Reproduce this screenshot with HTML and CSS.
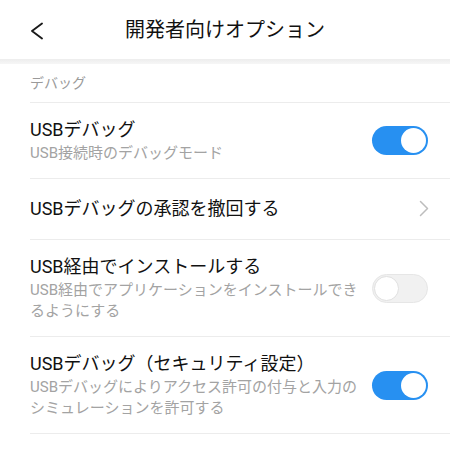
FILE: index.html
```html
<!DOCTYPE html>
<html lang="ja">
<head>
<meta charset="utf-8">
<link rel="stylesheet" href="styles.css">
</head>
<body>
<div class="screen">
  <header class="header">
    <div class="back">
      <svg width="14" height="18" viewBox="0 0 14 18"><polyline points="12,1.5 2,9 12,16.5" fill="none" stroke="#1a1a1a" stroke-width="1.9" stroke-linecap="round" stroke-linejoin="round"/></svg>
    </div>
    <h1 class="title">開発者向けオプション</h1>
    <div></div>
  </header>
  <div class="band"></div>
  <div class="section-label">デバッグ</div>
  <div class="row">
    <div class="text">
      <div class="row-title">USBデバッグ</div>
      <div class="row-sub">USB接続時のデバッグモード</div>
    </div>
    <div class="switch on"><span class="knob"></span></div>
  </div>
  <div class="row single">
    <div class="text">
      <div class="row-title">USBデバッグの承認を撤回する</div>
    </div>
    <svg class="chev" width="10" height="17" viewBox="0 0 10 17"><polyline points="1.5,1.5 8.5,8.5 1.5,15.5" fill="none" stroke="#bdbdbd" stroke-width="1.5" stroke-linecap="round" stroke-linejoin="round"/></svg>
  </div>
  <div class="row">
    <div class="text">
      <div class="row-title">USB経由でインストールする</div>
      <div class="row-sub">USB経由でアプリケーションをインストールできるようにする</div>
    </div>
    <div class="switch off"><span class="knob"></span></div>
  </div>
  <div class="row">
    <div class="text">
      <div class="row-title">USBデバッグ（セキュリティ設定）</div>
      <div class="row-sub">USBデバッグによりアクセス許可の付与と入力のシミュレーションを許可する</div>
    </div>
    <div class="switch on"><span class="knob"></span></div>
  </div>
</div>
</body>
</html>
```

FILE: styles.css
```css
html, body {
  margin: 0;
  padding: 0;
  background: #ffffff;
}
body {
  font-family: Roboto, "Noto Sans CJK JP", sans-serif;
  color: #111111;
}
.screen {
  width: 450px;
}
.header {
  height: 59px;
  display: grid;
  grid-template-columns: 1fr auto 1fr;
  align-items: center;
}
.back {
  padding-left: 30px;
  display: flex;
  align-items: center;
  padding-top: 2px;
}
.title {
  margin: 0;
  font-size: 20px;
  font-weight: 400;
  line-height: 28px;
  color: #111;
  padding-top: 1px;
}
.band {
  height: 5px;
  background: linear-gradient(#ededed, #f6f6f6);
}
.section-label {
  margin-left: 30px;
  padding: 9px 0 8px;
  font-size: 14px;
  line-height: 21px;
  color: #9a9a9a;
  border-bottom: 1px solid #ececec;
}
.row {
  margin-left: 30px;
  padding: 14px 22px 14px 0;
  display: flex;
  align-items: center;
  gap: 10px;
  border-bottom: 1px solid #ececec;
}
.row.single {
  padding-top: 17px;
  padding-bottom: 18px;
}
.text {
  flex: 1;
  min-width: 0;
}
.row-title {
  font-size: 18px;
  line-height: 25px;
  color: #111;
}
.row-sub {
  margin-top: 1px;
  font-size: 15px;
  line-height: 21px;
  color: #a3a3a3;
}
.switch {
  flex: none;
  width: 56px;
  height: 29px;
  border-radius: 15px;
  box-sizing: border-box;
  display: flex;
  align-items: center;
  padding: 0 2px;
}
.switch.on {
  background: #2790f1;
  justify-content: flex-end;
}
.switch.off {
  background: #f1f1f1;
  border: 1px solid #e6e6e6;
  justify-content: flex-start;
  padding: 0 1px;
}
.knob {
  width: 25px;
  height: 25px;
  border-radius: 50%;
  background: #ffffff;
  box-sizing: border-box;
}
.switch.off .knob {
  width: 25px;
  height: 25px;
  border: 1px solid #e0e0e0;
}
.chev {
  flex: none;
  margin-right: -1px;
}
```
